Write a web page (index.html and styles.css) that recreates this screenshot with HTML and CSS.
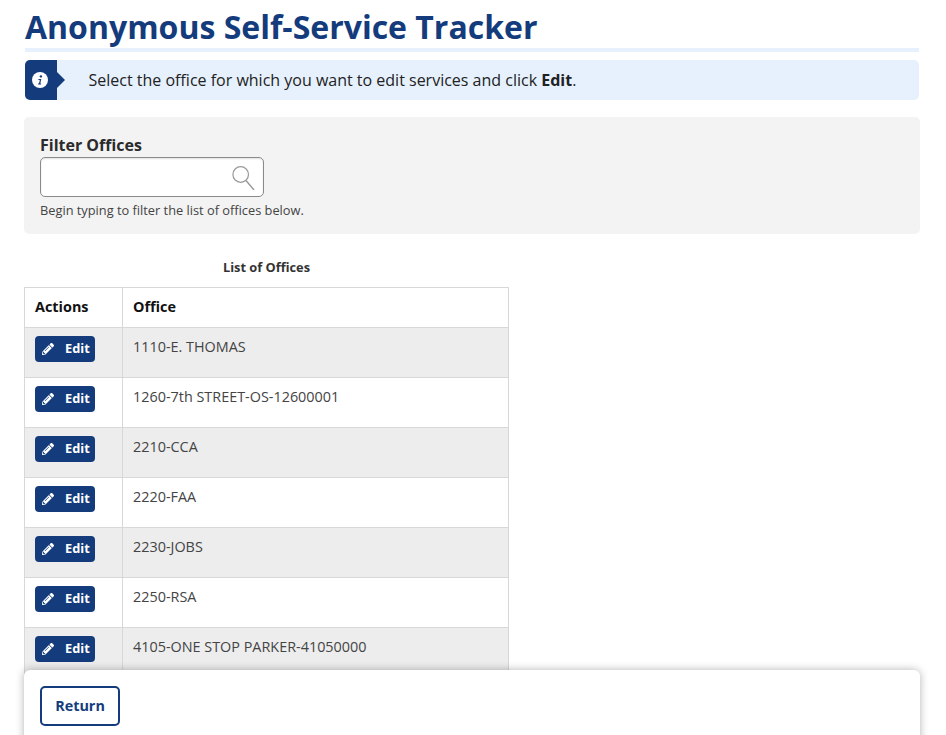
FILE: index.html
```html
<!DOCTYPE html>
<html lang="en">
<head>
<meta charset="utf-8">
<title>Anonymous Self-Service Tracker</title>
<link rel="stylesheet" href="styles.css">
</head>
<body>
<svg class="defs" aria-hidden="true"><symbol id="pencil" viewBox="0 0 512 512"><path fill-rule="evenodd" d="M497.9 142.1l-46.1 46.1c-4.7 4.7-12.3 4.7-17 0l-111-111c-4.7-4.7-4.7-12.3 0-17l46.1-46.1c18.7-18.7 49.1-18.7 67.9 0l60.1 60.1c18.8 18.7 18.8 49.1 0 67.9zM284.2 99.8L21.6 362.4.4 483.9c-2.9 16.4 11.4 30.6 27.8 27.8l121.5-21.3 262.6-262.6c4.7-4.7 4.7-12.3 0-17l-111-111c-4.8-4.7-12.4-4.7-17.1 0zM124.1 339.9c-5.5-5.5-5.5-14.3 0-19.8l154-154c5.5-5.5 14.3-5.5 19.8 0s5.5 14.3 0 19.8l-154 154c-5.5 5.5-14.3 5.5-19.8 0zM88 424h48v36.3l-64.5 11.3-31.1-31.1L51.7 376H88v48z"/></symbol></svg>
<main class="page">
  <h1 class="title">Anonymous Self-Service Tracker</h1>
  <div class="alert">
    <div class="alert-icon">
      <svg viewBox="0 0 16 16" width="16" height="16" aria-hidden="true"><circle cx="8" cy="8" r="8" fill="#fff"/><circle cx="8.9" cy="4.4" r="1.2" fill="#143c7d"/><path d="M6.5 7h2.8l-1 4.5h.9l-.2 1H5.9l.2-1h.9l.8-3.5h-1.5z" fill="#143c7d"/></svg>
    </div>
    <p class="alert-text">Select the office for which you want to edit services and click <strong>Edit</strong>.</p>
  </div>
  <section class="filter">
    <label class="filter-label" for="f">Filter Offices</label>
    <div class="filter-box">
      <input id="f" class="filter-input" type="text">
      <svg class="filter-icon" viewBox="0 0 24 24" width="24" height="24" aria-hidden="true"><circle cx="8.7" cy="8.5" r="7.8" fill="none" stroke="#999" stroke-width="1.2"/><path d="M14 14.5l8 9.5" fill="none" stroke="#999" stroke-width="1.4"/></svg>
    </div>
    <p class="filter-hint">Begin typing to filter the list of offices below.</p>
  </section>
  <table class="offices">
    <caption>List of Offices</caption>
    <thead>
      <tr><th class="col-actions">Actions</th><th>Office</th></tr>
    </thead>
    <tbody>
      <tr><td><a class="edit"><svg class="edit-icon" aria-hidden="true"><use href="#pencil"/></svg>Edit</a></td><td>1110-E. THOMAS</td></tr>
      <tr><td><a class="edit"><svg class="edit-icon" aria-hidden="true"><use href="#pencil"/></svg>Edit</a></td><td>1260-7th STREET-OS-12600001</td></tr>
      <tr><td><a class="edit"><svg class="edit-icon" aria-hidden="true"><use href="#pencil"/></svg>Edit</a></td><td>2210-CCA</td></tr>
      <tr><td><a class="edit"><svg class="edit-icon" aria-hidden="true"><use href="#pencil"/></svg>Edit</a></td><td>2220-FAA</td></tr>
      <tr><td><a class="edit"><svg class="edit-icon" aria-hidden="true"><use href="#pencil"/></svg>Edit</a></td><td>2230-JOBS</td></tr>
      <tr><td><a class="edit"><svg class="edit-icon" aria-hidden="true"><use href="#pencil"/></svg>Edit</a></td><td>2250-RSA</td></tr>
      <tr><td><a class="edit"><svg class="edit-icon" aria-hidden="true"><use href="#pencil"/></svg>Edit</a></td><td>4105-ONE STOP PARKER-41050000</td></tr>
    </tbody>
  </table>
</main>
<footer class="footer"><button class="return" type="button">Return</button></footer>
</body>
</html>
```
FILE: styles.css
```css
* { box-sizing: border-box; }
html, body { margin: 0; height: 735px; overflow: hidden; background: #fff; }
body { font-family: "Open Sans", sans-serif; color: #333; }
.defs { display: none; }
.page { padding: 0 26px 0 24px; }
.title {
  margin: 0 1px;
  height: 52px;
  font-size: 32px;
  line-height: 54px;
  font-weight: 700;
  color: #143c7d;
  border-bottom: 4px solid #e6f1fd;
  white-space: nowrap;
}
.alert {
  display: flex;
  align-items: center;
  height: 40px;
  margin: 8px 1px 0;
  background: #e6f1fd;
  border-radius: 5px;
  overflow: hidden;
}
.alert-icon {
  position: relative;
  flex: none;
  display: flex;
  align-items: center;
  width: 32px;
  height: 40px;
  padding-left: 7px;
  background: #143c7d;
}
.alert-icon::after {
  content: "";
  position: absolute;
  left: 32px;
  top: 12px;
  border-left: 8px solid #143c7d;
  border-top: 8px solid transparent;
  border-bottom: 8px solid transparent;
}
.alert-text { margin: 0 0 0 31.5px; font-size: 16px; line-height: 22px; color: #222; }
.alert-text strong { font-weight: 700; }
.filter {
  height: 117px;
  margin-top: 17px;
  padding: 16px 16px 0;
  background: #f3f3f3;
  border-radius: 5px;
}
.filter-label {
  display: block;
  font-size: 16px;
  line-height: 24px;
  font-weight: 700;
  color: #2b2b2b;
}
.filter-box { position: relative; width: 224px; height: 40px; }
.filter-input {
  display: block;
  width: 100%;
  height: 100%;
  border: 1px solid #8a8a8a;
  border-radius: 5px;
  background: #fff;
  box-shadow: inset 0 1px 2px rgba(0,0,0,.12);
}
.filter-icon { position: absolute; right: 8px; top: 9px; }
.filter-hint { margin: 4px 0 0; font-size: 12.8px; line-height: 18px; color: #444; }
.offices {
  width: 485px;
  margin-top: 21px;
  border-collapse: collapse;
  font-size: 14.4px;
  color: #444;
}
.offices caption {
  height: 32px;
  font-size: 12.8px;
  line-height: 24px;
  font-weight: 700;
  color: #333;
  text-align: center;
}
.offices th, .offices td {
  border: 1px solid #d8d8d8;
  padding: 0 10px;
  text-align: left;
}
.offices th {
  height: 40px;
  padding-bottom: 2px;
  font-size: 14.4px;
  font-weight: 700;
  color: #111;
}
.col-actions { width: 98px; }
.offices td {
  height: 50px;
  padding-top: 8px;
  padding-bottom: 8px;
  line-height: 22px;
  vertical-align: top;
}
.offices tbody tr:nth-child(odd) { background: #ededed; }
.edit {
  display: flex;
  align-items: center;
  gap: 11px;
  width: 60px;
  height: 26px;
  padding: 0 0 2px 7px;
  background: #143c7d;
  border-radius: 4px;
  font-size: 12.8px;
  font-weight: 700;
  color: #fff;
}
.edit-icon { flex: none; width: 12px; height: 12px; margin-top: 2px; fill: #fff; }
.footer {
  position: fixed;
  left: 24px;
  top: 670px;
  width: 896px;
  height: 80px;
  padding: 16px;
  background: #fff;
  border-radius: 6px 6px 0 0;
  box-shadow: 0 0 8px rgba(0,0,0,.3);
}
.return {
  display: block;
  width: 80px;
  height: 40px;
  padding: 0 0 2px;
  border: 2px solid #143c7d;
  border-radius: 5px;
  background: #fff;
  font: 700 14.4px "Open Sans", sans-serif;
  color: #143c7d;
}
```
